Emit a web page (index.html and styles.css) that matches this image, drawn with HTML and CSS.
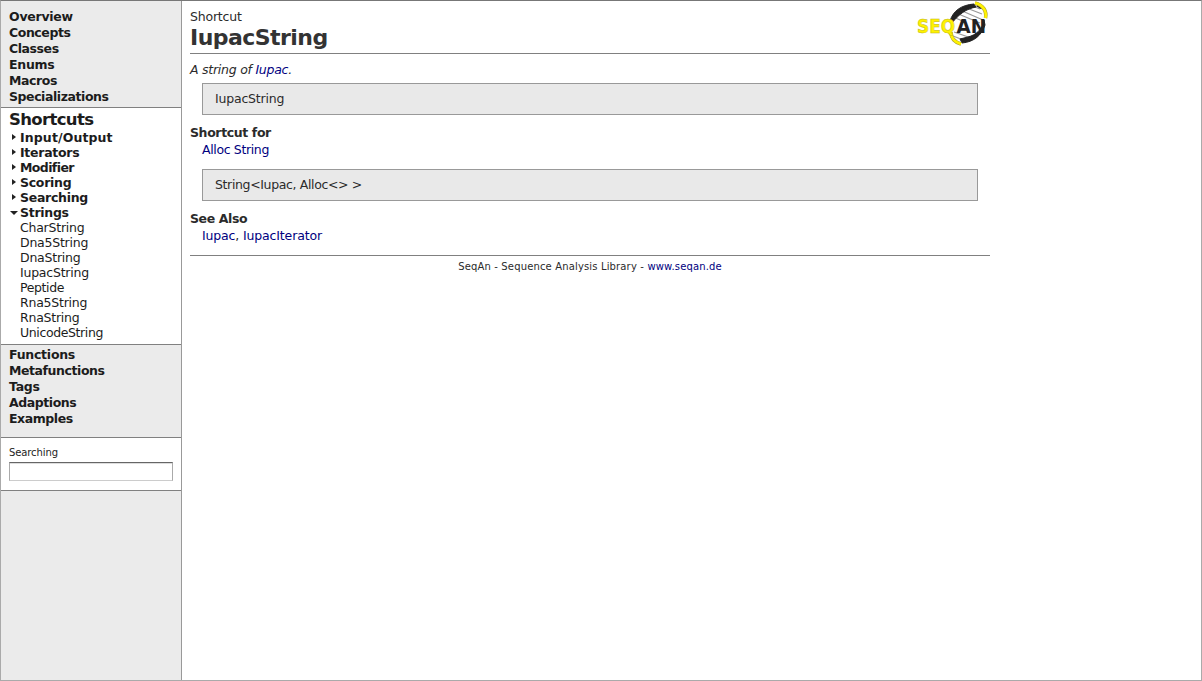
FILE: index.html
```html
<!DOCTYPE html>
<html lang="en">
<head>
<meta charset="utf-8">
<title>IupacString</title>
<link rel="stylesheet" href="styles.css">
</head>
<body>
<div class="window">
  <nav class="sidebar">
    <ul class="nav nav-top">
      <li class="loose">Overview</li><li>Concepts</li><li>Classes</li><li class="loose">Enums</li><li>Macros</li><li>Specializations</li>
    </ul>
    <section class="current">
      <h2><span>Shortcuts</span></h2>
      <ul class="tree">
        <li class="group wide"><i class="closed"></i><span>Input/Output</span></li>
        <li class="group"><i class="closed"></i><span>Iterators</span></li>
        <li class="group narrow"><i class="closed"></i><span>Modifier</span></li>
        <li class="group"><i class="closed"></i><span>Scoring</span></li>
        <li class="group"><i class="closed"></i><span>Searching</span></li>
        <li class="group"><i class="open"></i><span>Strings</span></li>
        <li>CharString</li><li>Dna5String</li><li>DnaString</li><li>IupacString</li>
        <li class="tight">Peptide</li><li>Rna5String</li><li>RnaString</li><li class="tight">UnicodeString</li>
      </ul>
    </section>
    <ul class="nav nav-bottom">
      <li class="loose">Functions</li><li>Metafunctions</li><li class="loose">Tags</li><li>Adaptions</li><li>Examples</li>
    </ul>
    <form class="search">
      <label for="q">Searching</label>
      <input id="q" type="text">
    </form>
  </nav>
  <main class="content">
    <header class="header">
      <div>
        <div class="kind">Shortcut</div>
        <h1>IupacString</h1>
      </div>
      <svg class="logo" width="72" height="46" viewBox="0 0 72 46">
        <path d="M34 19C38 8 48 3 60 5L67 12L67 22C64 33 56 39 45 40L36 36Z" fill="#fff"/>
        <path d="M47 6l18 7M43 9l23 10M39 12l24 10M36 16l12 5M37 31l20 7M36 35l13 5M53 4l10 4" stroke="#999" stroke-width="1.300"/>
        <path d="M33 20C36 10 44 4 57 3L59 6C49 8 42 13 35 22Z" fill="#222" stroke="#222"/>
        <path d="M67 19C66 28 59 34 51 36L43 38L45 42C57 41 65 34 68 24Z" fill="#222" stroke="#222"/>
        <path d="M60 4l5 3" stroke="#222" stroke-width="3"/>
        <path d="M58 2C66 4 70 10 68.500 17" fill="none" stroke="#aaa032" stroke-width="3.600"/>
        <path d="M58 2C66 4 70 10 68.500 17" fill="none" stroke="#fff200" stroke-width="2.600"/>
        <path d="M34 31C34 37 37 41 44 43" fill="none" stroke="#aaa032" stroke-width="3.600"/>
        <path d="M34 31C34 37 37 41 44 43" fill="none" stroke="#fff200" stroke-width="2.600"/>
        <text class="logo-seq" x="0" y="32" textLength="38" lengthAdjust="spacingAndGlyphs">SEQ</text>
        <text class="logo-an" x="39.500" y="32" textLength="29.500" lengthAdjust="spacingAndGlyphs">AN</text>
      </svg>
    </header>
    <p class="summary">A string of <a>Iupac</a>.</p>
    <div class="code"><span>IupacString</span></div>
    <h3>Shortcut for</h3>
    <div class="links tight"><a>Alloc String</a></div>
    <div class="code second tight"><span>String&lt;Iupac, Alloc&lt;&gt; &gt;</span></div>
    <h3>See Also</h3>
    <div class="links"><a>Iupac</a>, <a>IupacIterator</a></div>
    <footer class="footer"><span>SeqAn - Sequence Analysis Library - <a>www.seqan.de</a></span></footer>
  </main>
</div>
</body>
</html>
```
FILE: styles.css
```css
* { box-sizing: border-box; margin: 0; padding: 0; }
body {
  background: #fff;
  color: #2b2b2b;
  font: 12.5px/16px "DejaVu Sans", sans-serif;
}
.window {
  display: flex;
  height: 681px;
  border: 1px solid #aaa;
  border-top-color: #777;
}
ul { list-style: none; }
a { color: #000080; }
.sidebar {
  width: 181px;
  flex: none;
  background: #ebebeb;
  border-right: 1px solid #999;
  color: #1c1c1c;
}
.nav { padding-left: 8px; font-weight: bold; letter-spacing: -0.43px; }
.nav .loose { letter-spacing: -0.25px; }
.nav-top { height: 106px; padding-top: 8px; }
.current {
  height: 238px;
  background: #fff;
  border-top: 1px solid #808080;
  border-bottom: 1px solid #808080;
}
h2 { padding: 2px 0 0 8px; font-size: 16.5px; line-height: 20px; letter-spacing: -0.65px; }
.tree { line-height: 15px; }
.tree li { display: flex; padding-left: 19px; letter-spacing: -0.23px; }
.tree .group { padding-left: 8px; font-weight: bold; letter-spacing: -0.28px; }
.tree .wide { letter-spacing: 0.12px; }
.tree .narrow { letter-spacing: -0.6px; }
.tree .tight { letter-spacing: -0.38px; }
.group i { width: 11px; height: 15px; flex: none; }
.group i::before { content: ""; display: block; width: 0; height: 0; }
.group .closed::before { margin: 4px 0 0 3px; border: 3.5px solid transparent; border-left: 4px solid #222; border-right: 0; }
.group .open::before { margin: 6px 0 0 1px; border: 4px solid transparent; border-top: 4px solid #222; border-bottom: 0; }
.nav-bottom { height: 92px; padding-top: 2px; }
.search {
  height: 54px;
  padding: 8px 8px 0;
  background: #fff;
  border-top: 1px solid #808080;
  border-bottom: 1px solid #808080;
}
.search label { display: block; height: 16px; font-size: 10px; line-height: 14px; letter-spacing: -0.1px; }
.search input {
  display: block;
  width: 164px;
  height: 19px;
  border: 1px solid #aaa;
  border-top: 1px solid #666;
  border-bottom-color: #ccc;
  background: #fff;
  box-shadow: inset 0 1px 0 #ddd;
}
.content { width: 800px; margin-left: 8px; }
.header {
  display: flex;
  justify-content: space-between;
  height: 53px;
  border-bottom: 1px solid #808080;
}
.kind { padding-top: 8px; height: 24px; letter-spacing: -0.2px; }
h1 { color: #333; font-size: 22px; line-height: 25px; letter-spacing: -0.55px; }
.logo { margin-right: 1px; }
.logo text { font: bold 19.5px "DejaVu Sans", sans-serif; }
.logo-seq { fill: #fff200; stroke: #bdb31e; stroke-width: 0.5px; }
.logo-an { fill: #222; }
.summary { padding-top: 8px; height: 29px; font-style: italic; letter-spacing: -0.25px; }
.code {
  height: 32px;
  margin: 0 12px;
  padding: 7px 12px;
  border: 1px solid #999;
  background: #e9e9e9;
  letter-spacing: -0.2px;
}
h3 { margin-top: 10px; font-size: 12.5px; line-height: 16px; letter-spacing: -0.38px; }
.links { padding-left: 12px; line-height: 18px; letter-spacing: -0.15px; }
.links.tight, .code.tight { letter-spacing: -0.36px; }
.second { margin-top: 10px; }
.footer {
  margin-top: 10px;
  padding-top: 3px;
  border-top: 1px solid #808080;
  text-align: center;
  font-size: 10px;
  letter-spacing: 0.15px;
}
```
